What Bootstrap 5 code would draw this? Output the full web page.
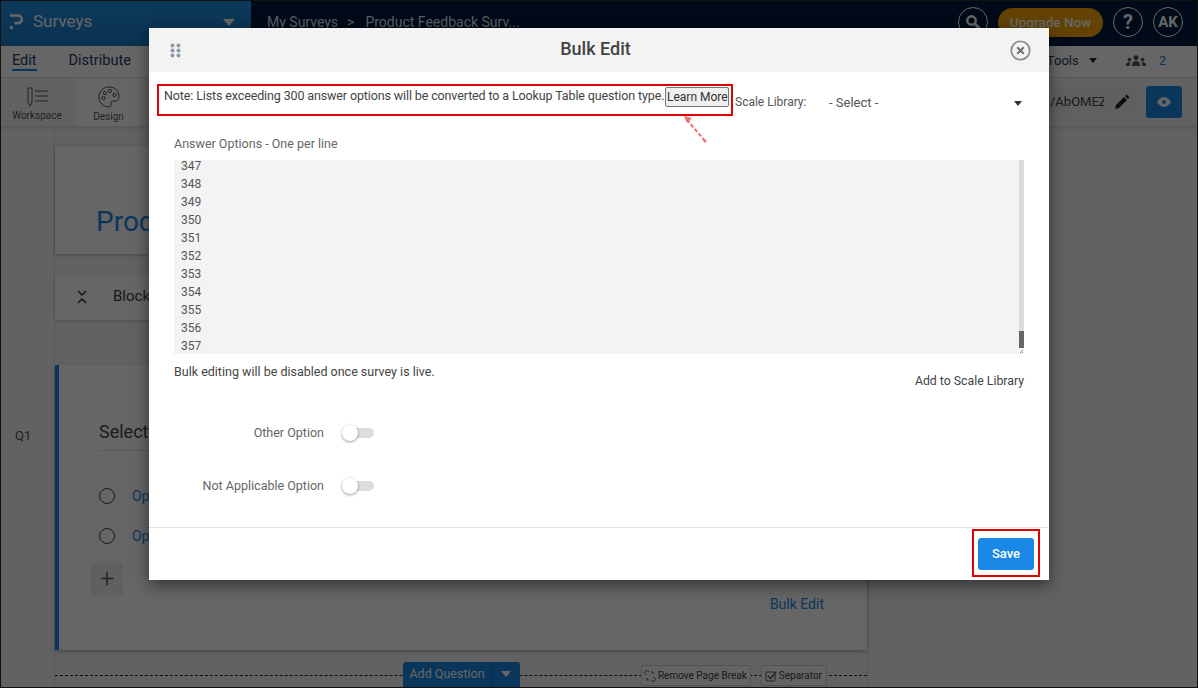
<!DOCTYPE html>
<html lang="en">
<head>
<meta charset="utf-8">
<title>Bulk Edit</title>
<link href="https://cdn.jsdelivr.net/npm/bootstrap@5.3.0/dist/css/bootstrap.min.css" rel="stylesheet">
<style>
html,body{margin:0;height:688px;overflow:hidden;background:#fff}
body{font-family:Roboto,"Liberation Sans",sans-serif;font-size:13px;color:#444}
.stage{position:relative;width:1198px;height:688px;overflow:hidden;background:#f4f4f4;border:1px solid #111}
.topbar{height:45px;background:#01193f;color:#fff}
.brandbox{width:250px;background:linear-gradient(#2391e2,#1a7cc9);font-size:17px;padding-bottom:3px}
.crumbs{font-size:14px;padding:0 0 3px 16px;color:#dfe6ee}
.crumbsep{margin:0 3px 0 1px}
.circbtn{width:30px;height:30px;border:1.5px solid #fff;border-radius:50%;font-weight:700;font-size:15px}
.upgrade{width:105px;height:29px;border-radius:15px;background:#f9a60c;font-weight:500;font-size:13.5px;color:#fff}
.topright{gap:10px;padding:0 14px 3px 0}
.tabrow{height:32px;background:#fff;border-bottom:1px solid #ddd;font-size:14.5px;color:#173f67;padding:0 0 2px 11px}
.tabon{border-bottom:2px solid #1b87e6;line-height:17px;margin-top:2px}
.tabnext{margin-left:32px}
.toolslbl{font-size:13px;margin-left:auto}
.toolsarrow{margin-left:10px}
.peoplecount{color:#1b87e6;font-size:13px;margin-right:31px}
.toolrow{height:48px;background:#f5f5f5;box-shadow:0 2px 3px rgba(0,0,0,.1);font-size:10px;color:#555}
.toolcell{width:63px;padding-top:4px}
.toolfirst{width:72px;margin-right:4px}
.toolsel{background:#fff}
.urlbox{width:140px;height:30px;background:#f0f0f0;font-size:13px;color:#444;padding-right:8px}
.urlclip{width:54px;overflow:hidden}
.urlpen{margin-left:10px}
.eyebtn{width:36px;height:32px;background:#1b87e6;border-radius:3px}
.toolend{margin-right:15px;gap:8px}
.gutter{width:54px;border-right:1px solid #e0e0e0;height:562px;font-size:13px;color:#555}
.qlabel{margin-top:300px;padding-left:14px}
.contentcol{width:813px;border-right:1px solid #ddd;height:562px}
.headcard{height:108px;margin-top:20px;background:#fff;box-shadow:0 1px 4px rgba(0,0,0,.25);padding:58px 0 0 41px;font-size:28px;color:#1b87e6;line-height:36px}
.blockcard{height:45px;margin-top:21px;background:#fff;box-shadow:0 1px 3px rgba(0,0,0,.2);padding:0 0 2px 22px;font-size:15px;gap:26px}
.qcard{height:285px;margin-top:45px;background:#fff;border-left:4px solid #1b87e6;box-shadow:0 2px 4px rgba(0,0,0,.25);padding:53px 43px 0 40px}
.qtitle{font-size:18px;height:33px;width:300px;border-bottom:1px solid #ddd;color:#444}
.optline{height:40px;color:#1b87e6;font-size:14px;gap:17px}
.optfirst{margin-top:25px}
.radiomark{width:16px;height:16px;border:1.5px solid #444;border-radius:50%}
.plusbtn{width:32px;height:32px;margin:7px 0 0 -8px;background:#f1f1f1;color:#555;font-size:26px;font-weight:300;line-height:30px;text-align:center}
.bulklink{color:#1b87e6;font-size:14px;text-align:right;margin-top:-1px}
.dashrow{height:26px;margin-top:12px;position:relative}
.dashrow::before{content:"";position:absolute;left:0;right:0;top:13px;border-top:1px dashed #222}
.addq{position:relative;margin-left:348px;width:117px;height:28px;background:#1b87e6;border-radius:3px;color:#fff;font-size:12.5px}
.addq span:first-child{flex:1;text-align:center;border-right:1px solid #1569b5;line-height:24px}
.addq span:last-child{width:28px;text-align:center;line-height:22px}
.minibtn{position:relative;height:21px;border:1px solid #ccc;background:#fafafa;border-radius:2px;font-size:10px;color:#444;margin-top:3px;gap:2px}
.minifirst{margin-left:auto;padding:0 3px 0 2px}
.minilast{margin:3px 40px 0 10px;padding:0 4px 0 3px}
.veil{position:absolute;inset:0;background:rgba(0,0,0,.6)}
.dialog{position:absolute;left:148px;top:27px;width:900px;height:552px;background:#fff;box-shadow:0 5px 15px rgba(0,0,0,.5)}
.dlghead{height:44px;background:#f3f3f3;padding:0 18px 0 21px}
.dlgtitle{font-size:18px;font-weight:500;color:#444;padding-bottom:3px}
.noterow{padding:12px 0 0 8px}
.notebox{width:576px;height:32px;border:2px solid #e00000;padding:1px 0 0 5px;color:#444;font-size:12.5px;letter-spacing:-.125px}
.learnbtn{height:20px;width:64px;border:1px solid #767676;border-radius:2px;background:#efefef;font-size:12px;line-height:18px;text-align:center;color:#333;margin-left:1px;letter-spacing:0}
.scalelbl{padding:9px 0 0 2px;width:96px;color:#555;font-size:12px}
.scaleselect{width:193px;padding:9px 0 0 0;color:#555;font-size:13px}
.fieldlbl{padding:20px 0 0 25px;font-size:12.5px;color:#666;line-height:16px}
.linebox{margin:8px 25px 0 25px;height:194px;background:#f3f3f3;overflow:hidden;color:#555;font-size:12px;line-height:18px}
.linelist{margin-top:-3px;padding-left:7px}
.scrollcol{width:5px}
.scrolltrack{width:5px;background:#dcdcdc;justify-content:flex-end}
.scrollthumb{width:5px;height:17px;background:#666}
.notesrow{padding:9px 25px 0;height:53px;font-size:12.5px}
.addlib{font-size:12.3px;padding-top:9px}
.optrow{height:53px;align-items:center}
.optlbl{width:175px;text-align:right;font-size:12.5px;color:#666}
.togtrack{position:relative;width:32px;height:10px;margin:0 0 2px 18px;border-radius:5px;background:#ddd}
.togknob{position:absolute;left:0;top:-3px;width:16px;height:16px;border-radius:50%;background:#fff;box-shadow:0 1px 3px rgba(0,0,0,.4)}
.dlgfoot{position:absolute;left:0;right:0;bottom:0;height:53px;border-top:1px solid #e3e3e3}
.savebox{position:absolute;right:9px;top:1px;width:68px;height:48px;border:2px solid #e00000}
.savebtn{position:absolute;left:4px;top:7px;width:56px;height:32px;border:0;border-radius:3px;background:#1b87e6;color:#fff;font-size:13px;font-weight:500;padding:0}
.arrowmark{position:absolute;left:520px;top:85px}
</style>
</head>
<body>
<div class="stage">
  <div class="topbar d-flex">
    <div class="brandbox d-flex align-items-center">
      <svg class="ms-2" width="16" height="18" viewBox="0 0 16 18"><path d="M1 2.500h8a3.800 3.800 0 0 1 0 7.600H5.500" fill="none" stroke="#fff" stroke-width="2.600"/><rect x="1" y="13" width="2.800" height="3.200" fill="#fff"/></svg>
      <span class="ms-2">Surveys</span>
      <svg class="ms-auto me-3" width="12" height="7" viewBox="0 0 12 7"><path d="M0 0h12L6 7z" fill="#fff"/></svg>
    </div>
    <div class="crumbs d-flex align-items-center flex-grow-1 gap-2"><span>My Surveys</span><span class="crumbsep">&gt;</span><span>Product Feedback Surv...</span></div>
    <div class="topright d-flex align-items-center">
      <div class="circbtn d-flex align-items-center justify-content-center"><svg width="16" height="16" viewBox="0 0 16 16"><circle cx="6.500" cy="6.500" r="4.200" fill="none" stroke="#fff" stroke-width="2.400"/><path d="M10 10l4.500 4.500" stroke="#fff" stroke-width="3"/></svg></div>
      <div class="upgrade d-flex align-items-center justify-content-center">Upgrade Now</div>
      <div class="circbtn d-flex align-items-center justify-content-center fs-5">?</div>
      <div class="circbtn d-flex align-items-center justify-content-center">AK</div>
    </div>
  </div>
  <div class="tabrow d-flex align-items-center">
    <span class="tabon">Edit</span><span class="tabnext">Distribute</span>
    <span class="toolslbl">Tools</span>
    <svg class="toolsarrow" width="8" height="5" viewBox="0 0 8 5"><path d="M0 0h8L4 5z" fill="#222"/></svg>
    <svg class="ms-4 ps-1" width="26" height="13" viewBox="0 0 24 12"><g fill="#555"><circle cx="12" cy="3" r="2.600"/><path d="M7.500 12c0-4 2-5.500 4.500-5.500s4.500 1.500 4.500 5.500z"/><circle cx="5" cy="5" r="2"/><path d="M1 12c0-3 1.500-4.500 4-4.500 .8 0 1 .2 1 .2-.6 1-.8 2.500-.8 4.300z"/><circle cx="19" cy="5" r="2"/><path d="M23 12c0-3-1.500-4.500-4-4.500-.8 0-1 .2-1 .2 .6 1 .8 2.500 .8 4.300z"/></g></svg>
    <span class="peoplecount ms-2 ps-1">2</span>
  </div>
  <div class="toolrow d-flex align-items-stretch">
    <div class="toolcell toolfirst d-flex flex-column align-items-center justify-content-center">
      <svg width="24" height="22" viewBox="0 0 24 22"><path d="M3 2h4v14l-2 4-2-4z" fill="none" stroke="#555"/><path d="M10 5h13M10 10h13M10 15h13" stroke="#555"/></svg>
      <span>Workspace</span>
    </div>
    <div class="toolcell toolsel d-flex flex-column align-items-center justify-content-center">
      <svg width="24" height="24" viewBox="0 0 24 24"><path d="M12 2C6 2 2 6.500 2 12s4 10 10 10c2 0 2.500-1.500 2-3-.6-2 .5-3 2.500-3H19c2 0 3-2 3-4.500C22 6 18 2 12 2z" fill="none" stroke="#555"/><circle cx="8" cy="8" r="1.600" fill="none" stroke="#555"/><circle cx="13" cy="6" r="1.600" fill="none" stroke="#555"/><circle cx="17.500" cy="10" r="1.600" fill="none" stroke="#555"/><circle cx="6.500" cy="13" r="1.600" fill="none" stroke="#555"/></svg>
      <span>Design</span>
    </div>
    <div class="toolend ms-auto d-flex align-items-center">
      <div class="urlbox d-flex align-items-center justify-content-end"><div class="urlclip text-nowrap">/AbOMEZ8</div>
        <svg class="urlpen flex-shrink-0" width="16" height="16" viewBox="0 0 16 16"><path d="M1 15l1-4 8-8 3 3-8 8zM11 2l1.500-1.500 3 3L14 5z" fill="#222"/></svg></div>
      <div class="eyebtn d-flex align-items-center justify-content-center"><svg width="14" height="10" viewBox="0 0 14 10"><path d="M0 5c2-3 4.500-5 7-5s5 2 7 5c-2 3-4.500 5-7 5S2 8 0 5z" fill="#fff"/><circle cx="7" cy="5" r="2" fill="#1b87e6"/></svg></div>
    </div>
  </div>
  <div class="d-flex">
    <div class="gutter"><div class="qlabel">Q1</div></div>
    <div class="contentcol">
      <div class="headcard">Prod</div>
      <div class="blockcard d-flex align-items-center"><svg width="10" height="14" viewBox="0 0 10 14"><path d="M1 1l4 4 4-4M1 13l4-4 4 4" fill="none" stroke="#333" stroke-width="1.500"/></svg><span>Block</span></div>
      <div class="qcard">
        <div class="qtitle">Select</div>
        <div class="optline optfirst d-flex align-items-center"><span class="radiomark"></span><span>Op</span></div>
        <div class="optline d-flex align-items-center"><span class="radiomark"></span><span>Op</span></div>
        <div class="plusbtn">+</div>
        <div class="bulklink">Bulk Edit</div>
      </div>
      <div class="dashrow d-flex">
        <div class="addq d-flex"><span>Add Question</span><span><svg width="10" height="6" viewBox="0 0 10 6"><path d="M0 0h10L5 6z" fill="#fff"/></svg></span></div>
        <div class="minibtn minifirst d-flex align-items-center"><svg width="12" height="12" viewBox="0 0 12 12"><path d="M5 2L3.500 .8a2 2 0 0 0-2.700 2.700L2.500 5M7 10l1.500 1.200a2 2 0 0 0 2.700-2.700L9.500 7M8 1v2M10 3H8M2 9h2M4 9v2" fill="none" stroke="#555"/></svg><span>Remove Page Break</span></div>
        <div class="minibtn minilast d-flex align-items-center"><svg width="12" height="12" viewBox="0 0 12 12"><rect x="1" y="2" width="9" height="9" rx="1" fill="none" stroke="#555"/><path d="M3 6l2.500 2.500L11 2" fill="none" stroke="#555" stroke-width="1.500"/></svg><span>Separator</span></div>
      </div>
    </div>
  </div>
  <div class="veil"></div>
  <div class="dialog">
    <div class="dlghead d-flex align-items-center justify-content-between">
      <svg width="11" height="15" viewBox="0 0 11 15"><g fill="#8c9aa6"><circle cx="2.500" cy="2.500" r="2"/><circle cx="8.500" cy="2.500" r="2"/><circle cx="2.500" cy="7.500" r="2"/><circle cx="8.500" cy="7.500" r="2"/><circle cx="2.500" cy="12.500" r="2"/><circle cx="8.500" cy="12.500" r="2"/></g></svg>
      <span class="dlgtitle">Bulk Edit</span>
      <svg width="21" height="21" viewBox="0 0 21 21"><circle cx="10.500" cy="10.500" r="9.200" fill="none" stroke="#8f8f8f" stroke-width="1.800"/><path d="M7.200 7.200l6.600 6.600M13.800 7.200l-6.600 6.600" stroke="#6f6f6f" stroke-width="2"/></svg>
    </div>
    <div class="noterow d-flex">
      <div class="notebox d-flex align-items-start text-nowrap">
        <span>Note: Lists exceeding 300 answer options will be converted to a Lookup Table question type.</span>
        <span class="learnbtn">Learn More</span>
      </div>
      <div class="scalelbl text-nowrap">Scale Library:</div>
      <div class="scaleselect d-flex justify-content-between"><span>- Select -</span><svg class="mt-2" width="8" height="5" viewBox="0 0 8 5"><path d="M0 0h8L4 5z" fill="#333"/></svg></div>
    </div>
    <svg class="arrowmark" width="40" height="32" viewBox="0 0 40 32"><path d="M36 28L19 8" stroke="#f26d6d" stroke-width="2" stroke-dasharray="4 2"/><path d="M15 3l8 2-5 5z" fill="#f26d6d"/><circle cx="36" cy="28" r="1.500" fill="#f26d6d"/></svg>
    <div class="fieldlbl">Answer Options - One per line</div>
    <div class="linebox d-flex justify-content-between">
      <div class="linelist"><div>347</div><div>348</div><div>349</div><div>350</div><div>351</div><div>352</div><div>353</div><div>354</div><div>355</div><div>356</div><div>357</div></div>
      <div class="scrollcol d-flex flex-column">
        <div class="scrolltrack d-flex flex-column flex-grow-1"><div class="scrollthumb"></div></div>
        <svg width="5" height="6" viewBox="0 0 5 6"><path d="M1 5l3-3M3 5l1-1" stroke="#666" stroke-width=".7"/></svg>
      </div>
    </div>
    <div class="notesrow d-flex justify-content-between"><span>Bulk editing will be disabled once survey is live.</span><span class="addlib">Add to Scale Library</span></div>
    <div class="optrow d-flex"><div class="optlbl">Other Option</div><div class="togtrack"><span class="togknob"></span></div></div>
    <div class="optrow d-flex"><div class="optlbl">Not Applicable Option</div><div class="togtrack"><span class="togknob"></span></div></div>
    <div class="dlgfoot"><div class="savebox"><button class="savebtn" type="button">Save</button></div></div>
  </div>
</div>
<script src="https://cdn.jsdelivr.net/npm/bootstrap@5.3.0/dist/js/bootstrap.bundle.min.js"></script>
</body>
</html>
